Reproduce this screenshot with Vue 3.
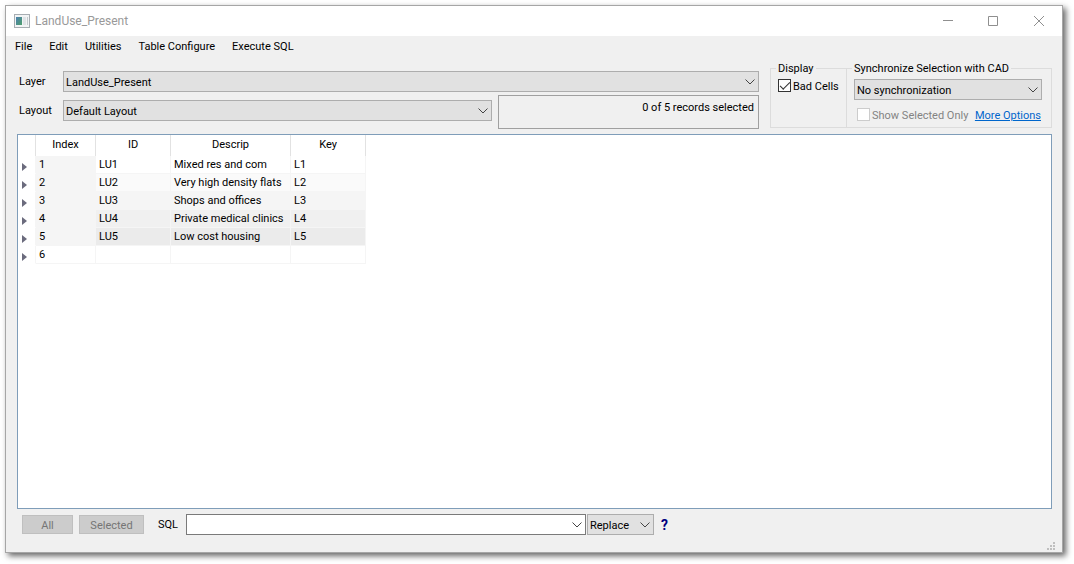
<script setup>
import { ref } from 'vue'

const menus = ['File', 'Edit', 'Utilities', 'Table Configure', 'Execute SQL']
const columns = ['Index', 'ID', 'Descrip', 'Key']

const rows = [
  { index: 1, id: 'LU1', descrip: 'Mixed res and com', key: 'L1' },
  { index: 2, id: 'LU2', descrip: 'Very high density flats', key: 'L2' },
  { index: 3, id: 'LU3', descrip: 'Shops and offices', key: 'L3' },
  { index: 4, id: 'LU4', descrip: 'Private medical clinics', key: 'L4' },
  { index: 5, id: 'LU5', descrip: 'Low cost housing', key: 'L5' },
  { index: 6, id: '', descrip: '', key: '' },
]

const layer = ref('LandUse_Present')
const layout = ref('Default Layout')
const sync = ref('No synchronization')
const mode = ref('Replace')
const badCells = ref(true)
const selectedOnly = ref(false)
const sql = ref('')
</script>

<template>
  <main class="window">
    <header class="titlebar">
      <svg class="titlebar__icon" width="16" height="14" viewBox="0 0 16 14">
        <defs>
          <linearGradient id="pane" x1="0" y1="0" x2="1" y2="1">
            <stop offset="0" stop-color="#4c7fb0" />
            <stop offset="1" stop-color="#4fa06c" />
          </linearGradient>
        </defs>
        <rect x="0.5" y="0.5" width="15" height="13" fill="#f2f4f5" stroke="#a7adb2" />
        <rect x="2" y="3" width="6" height="8" fill="url(#pane)" />
        <rect x="9" y="3" width="3" height="8" fill="#dfe3e6" />
        <rect x="13" y="3" width="1" height="8" fill="#c4cace" />
      </svg>
      <h1 class="titlebar__text">LandUse_Present</h1>
      <button class="titlebar__button" type="button" aria-label="Minimize">
        <svg width="11" height="11"><path d="M1 4.5h10" stroke="#8f8f8f" /></svg>
      </button>
      <button class="titlebar__button" type="button" aria-label="Maximize">
        <svg width="11" height="11"><path d="M.5 .5h9v9h-9z" fill="none" stroke="#8f8f8f" /></svg>
      </button>
      <button class="titlebar__button" type="button" aria-label="Close">
        <svg width="11" height="11"><path d="M0 0l10 10M10 0l-10 10" stroke="#8f8f8f" /></svg>
      </button>
    </header>

    <nav class="menu">
      <button v-for="item in menus" :key="item" class="menu__item" type="button">{{ item }}</button>
    </nav>

    <section class="options">
      <div class="source">
        <div class="source__row">
          <label class="source__label" for="layer">Layer</label>
          <div class="combo combo--fill">
            <select id="layer" v-model="layer" class="combo__field">
              <option>LandUse_Present</option>
            </select>
            <svg class="combo__arrow" width="10" height="6"><path d="M.5 .5l4.5 4.5 4.5-4.5" /></svg>
          </div>
        </div>
        <div class="source__row">
          <label class="source__label" for="layout">Layout</label>
          <div class="combo combo--fill">
            <select id="layout" v-model="layout" class="combo__field">
              <option>Default Layout</option>
            </select>
            <svg class="combo__arrow" width="10" height="6"><path d="M.5 .5l4.5 4.5 4.5-4.5" /></svg>
          </div>
          <output class="records">0 of 5 records selected</output>
        </div>
      </div>

      <fieldset class="group group--display">
        <legend class="group__title">Display</legend>
        <label class="check"><input v-model="badCells" class="check__box" type="checkbox">Bad Cells</label>
      </fieldset>

      <fieldset class="group group--sync">
        <legend class="group__title">Synchronize Selection with CAD</legend>
        <div class="combo">
          <select v-model="sync" class="combo__field" aria-label="Synchronize Selection with CAD">
            <option>No synchronization</option>
          </select>
          <svg class="combo__arrow" width="10" height="6"><path d="M.5 .5l4.5 4.5 4.5-4.5" /></svg>
        </div>
        <div class="group__row">
          <label class="check check--off"><input v-model="selectedOnly" class="check__box" type="checkbox" disabled>Show Selected Only</label>
          <a class="link" href="#">More Options</a>
        </div>
      </fieldset>
    </section>

    <section class="sheet">
      <table class="grid">
        <thead>
          <tr>
            <th class="grid__handle"></th>
            <th v-for="column in columns" :key="column" :class="'grid__' + column.toLowerCase()">{{ column }}</th>
          </tr>
        </thead>
        <tbody>
          <tr v-for="row in rows" :key="row.index">
            <td class="grid__handle">
              <svg class="grid__arrow" width="5" height="8"><path d="M0 0l5 4-5 4z" fill="#6b6b7d" /></svg>
            </td>
            <td class="grid__number">{{ row.index }}</td>
            <td>{{ row.id }}</td>
            <td>{{ row.descrip }}</td>
            <td>{{ row.key }}</td>
          </tr>
        </tbody>
      </table>
    </section>

    <footer class="footer">
      <button class="button button--all" type="button" disabled>All</button>
      <button class="button button--selected" type="button" disabled>Selected</button>
      <label class="footer__label" for="sql">SQL</label>
      <div class="combo combo--sql">
        <input id="sql" v-model="sql" class="combo__field" type="text">
        <svg class="combo__arrow" width="10" height="6"><path d="M.5 .5l4.5 4.5 4.5-4.5" /></svg>
      </div>
      <div class="combo combo--mode">
        <select v-model="mode" class="combo__field" aria-label="Selection mode">
          <option>Replace</option>
        </select>
        <svg class="combo__arrow" width="10" height="6"><path d="M.5 .5l4.5 4.5 4.5-4.5" /></svg>
      </div>
      <button class="help" type="button">?</button>
      <svg class="grip" width="8" height="8" fill="#bfbfbf">
        <path d="M6 0h2v2h-2zM3 3h2v2h-2zM6 3h2v2h-2zM0 6h2v2h-2zM3 6h2v2h-2zM6 6h2v2h-2z" />
      </svg>
    </footer>
  </main>
</template>

<style>
body {
  background: #fff;
  margin: 0;
}
</style>

<style scoped>
* {
  box-sizing: border-box;
}

.window {
  background: #f0f0f0;
  border: 1px solid #a6a6a6;
  box-shadow: 3px 3px 6px rgba(0, 0, 0, 0.6);
  color: #000;
  display: flex;
  flex-direction: column;
  font: 11px/14px Roboto, "Open Sans", sans-serif;
  margin: 5px 11px 11px 5px;
  min-height: calc(100vh - 16px);
}

button,
input,
select {
  color: inherit;
  font: inherit;
  margin: 0;
}

.titlebar {
  align-items: center;
  background: #fff;
  display: flex;
  height: 30px;
  padding-left: 8px;
}

.titlebar__text {
  color: #999;
  flex: 1;
  font-size: 12px;
  font-weight: normal;
  margin: 0 0 0 5px;
}

.titlebar__button {
  align-items: center;
  background: none;
  border: 0;
  display: flex;
  height: 30px;
  justify-content: center;
  padding: 0;
  width: 46px;
}

.menu {
  display: flex;
  gap: 17px;
  padding: 4px 9px 2px;
}

.menu__item {
  background: none;
  border: 0;
  padding: 0;
}

.options {
  display: flex;
  padding: 4px 10px 5px 11px;
}

.source {
  flex: 1;
  padding: 11px 11px 0 0;
}

.source__row {
  display: flex;
}

.source__row + .source__row {
  margin-top: 3px;
}

.source__label {
  padding: 4px 0 0 2px;
  width: 46px;
}

.source__row + .source__row .source__label {
  padding-top: 9px;
}

.source__row + .source__row .combo {
  margin-top: 5px;
}

.combo {
  height: 21px;
  position: relative;
}

.combo--fill {
  flex: 1;
}

.combo__field {
  appearance: none;
  background: #e1e1e1;
  border: 1px solid #adadad;
  border-radius: 0;
  display: block;
  height: 21px;
  padding: 2px 20px 0 2px;
  width: 100%;
}

.combo__arrow {
  fill: none;
  pointer-events: none;
  position: absolute;
  right: 4px;
  stroke: #444;
  top: 8px;
}

.records {
  border: 1px solid #a0a0a0;
  height: 34px;
  margin-left: 6px;
  padding: 5px 4px 0;
  text-align: right;
  width: 261px;
}

.group {
  border: 1px solid #dcdcdc;
  height: 68px;
  margin: 0;
  min-width: 0;
  padding: 0 9px 0 7px;
}

.group--display {
  width: 77px;
}

.group--sync {
  margin-left: -1px;
  width: 206px;
}

.group__title {
  margin-left: -2px;
  padding: 2px 2px 0;
}

.group--sync .combo {
  margin-top: 3px;
}

.group__row {
  align-items: center;
  display: flex;
  justify-content: space-between;
  padding: 8px 1px 0 3px;
}

.check {
  align-items: flex-start;
  display: flex;
  gap: 2px;
  line-height: 16px;
  white-space: nowrap;
}

.group--display .check {
  margin-top: 3px;
}

.check--off {
  color: #838383;
}

.check__box {
  appearance: none;
  background: #fff;
  border: 1px solid #333;
  flex: none;
  height: 13px;
  position: relative;
  width: 13px;
}

.check__box:disabled {
  border-color: #ccc;
}

.check__box:checked::after {
  border: solid #333;
  border-width: 0 0 1px 1px;
  content: "";
  height: 4px;
  left: 1px;
  position: absolute;
  top: 2px;
  transform: rotate(-45deg);
  width: 9px;
}

.link {
  color: #0066cc;
  line-height: 16px;
  white-space: nowrap;
}

.sheet {
  background: #fff;
  border: 1px solid #7f9db9;
  flex: 1;
  margin: 0 10px 0 11px;
}

.grid {
  border-collapse: separate;
  border-spacing: 0;
  table-layout: fixed;
  width: 348px;
}

.grid th {
  border-right: 1px solid #e2e2e2;
  font-weight: normal;
  height: 21px;
  padding: 0 0 2px;
}

.grid td {
  border-bottom: 1px solid #f5f5f5;
  border-right: 1px solid #f5f5f5;
  height: 18px;
  padding: 1px 3px;
  white-space: nowrap;
}

.grid .grid__handle {
  width: 18px;
}

.grid td.grid__handle {
  background: #fff;
  border-bottom-color: #fff;
  padding: 5px 4px 0;
}

.grid__arrow {
  display: block;
}

.grid__index {
  width: 60px;
}

.grid__id,
.grid__key {
  width: 75px;
}

.grid__descrip {
  width: 120px;
}

.grid tr:nth-child(2) td {
  background: #fafafa;
}

.grid tr:nth-child(3) td {
  background: #f5f5f5;
}

.grid tr:nth-child(4) td {
  background: #f0f0f0;
}

.grid tr:nth-child(5) td {
  background: #ebebeb;
}

.grid tr:not(:last-child) td.grid__number {
  background: #f5f5f5;
}

.grid tr td.grid__handle:first-child {
  background: #fff;
}

.footer {
  align-items: flex-start;
  display: flex;
  height: 43px;
  padding: 5px 16px 0;
  position: relative;
}

.button {
  background: #ccc;
  border: 1px solid #bfbfbf;
  color: #757575;
  height: 19px;
  margin-top: 1px;
  padding: 2px 0 0;
}

.button--all {
  width: 51px;
}

.button--selected {
  margin-left: 6px;
  width: 65px;
}

.footer__label {
  margin: 4px 0 0 14px;
  width: 28px;
}

.combo--sql {
  width: 400px;
}

.combo--sql .combo__field {
  background: #fff;
  border-color: #7a7a7a;
}

.combo--mode {
  margin-left: 1px;
  width: 67px;
}

.help {
  background: none;
  border: 0;
  color: #000080;
  font-size: 14px;
  font-weight: bold;
  margin: 4px 0 0 7px;
  padding: 0;
}

.grip {
  bottom: 2px;
  position: absolute;
  right: 7px;
}
</style>
